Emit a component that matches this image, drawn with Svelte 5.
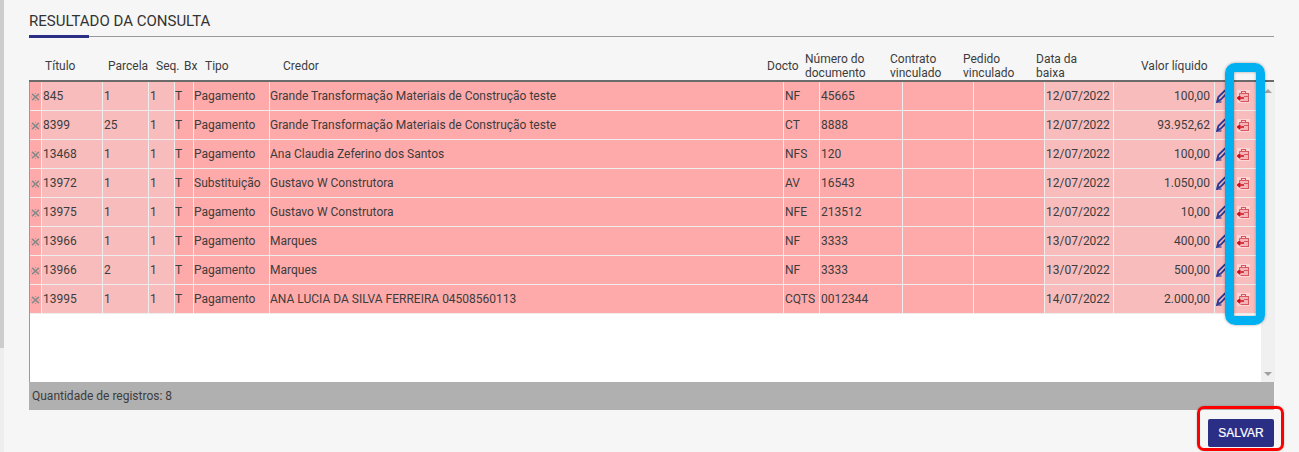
<script lang="ts">
	const columns = [
		{ key: 'x', w: 12 },
		{ key: 'titulo', w: 61, light: true },
		{ key: 'parcela', w: 46, light: true },
		{ key: 'seq', w: 26, light: true },
		{ key: 'bx', w: 19 },
		{ key: 'tipo', w: 76 },
		{ key: 'credor', w: 514 },
		{ key: 'docto', w: 36 },
		{ key: 'numero', w: 83 },
		{ key: 'contrato', w: 71 },
		{ key: 'pedido', w: 71 },
		{ key: 'baixa', w: 69, light: true },
		{ key: 'valor', w: 101, light: true },
		{ key: 'edit', w: 19, light: true },
		{ key: 'del', w: 27, light: true }
	];

	const rows = [
		['845', '1', '1', 'T', 'Pagamento', 'Grande Transformação Materiais de Construção teste', 'NF', '45665', '12/07/2022', '100,00'],
		['8399', '25', '1', 'T', 'Pagamento', 'Grande Transformação Materiais de Construção teste', 'CT', '8888', '12/07/2022', '93.952,62'],
		['13468', '1', '1', 'T', 'Pagamento', 'Ana Claudia Zeferino dos Santos', 'NFS', '120', '12/07/2022', '100,00'],
		['13972', '1', '1', 'T', 'Substituição', 'Gustavo W Construtora', 'AV', '16543', '12/07/2022', '1.050,00'],
		['13975', '1', '1', 'T', 'Pagamento', 'Gustavo W Construtora', 'NFE', '213512', '12/07/2022', '10,00'],
		['13966', '1', '1', 'T', 'Pagamento', 'Marques', 'NF', '3333', '13/07/2022', '400,00'],
		['13966', '2', '1', 'T', 'Pagamento', 'Marques', 'NF', '3333', '13/07/2022', '500,00'],
		['13995', '1', '1', 'T', 'Pagamento', 'ANA LUCIA DA SILVA FERREIRA 04508560113', 'CQTS', '0012344', '14/07/2022', '2.000,00']
	];
</script>

<div class="page">
	<div class="side"></div>
	<section class="panel">
		<h2>RESULTADO DA CONSULTA</h2>

		<div class="head">
			<span class="h-titulo">Título</span>
			<span class="h-parcela">Parcela</span>
			<span class="h-seq">Seq.</span>
			<span class="h-bx">Bx</span>
			<span class="h-tipo">Tipo</span>
			<span class="h-credor">Credor</span>
			<span class="h-docto">Docto</span>
			<span class="h-numero">Número do<br />documento</span>
			<span class="h-contrato">Contrato<br />vinculado</span>
			<span class="h-pedido">Pedido<br />vinculado</span>
			<span class="h-baixa">Data da<br />baixa</span>
			<span class="h-valor">Valor líquido</span>
		</div>

		<div class="body">
			<div class="rows">
				<table>
					<colgroup>
						{#each columns as col}
							<col style="width: {col.w}px" />
						{/each}
					</colgroup>
					<tbody>
						{#each rows as r}
							<tr>
								<td class="mark">
									<svg width="9" height="8" viewBox="0 0 9 8">
										<path d="M1 .8 8 7.2M8 .8 1 7.2" stroke="#8a8a8a" stroke-width="1.6" />
										<path d="M4 0h1v1H4zM4 7h1v1H4zM0 3.5h1v1H0zM8 3.5h1v1H8z" fill="#a08f8f" />
									</svg>
								</td>
								<td class="light">{r[0]}</td>
								<td class="light">{r[1]}</td>
								<td class="light">{r[2]}</td>
								<td class="tight">{r[3]}</td>
								<td class="tight">{r[4]}</td>
								<td class="tight">{r[5]}</td>
								<td>{r[6]}</td>
								<td>{r[7]}</td>
								<td></td>
								<td></td>
								<td class="light">{r[8]}</td>
								<td class="light right">{r[9]}</td>
								<td class="light icon">
									<svg width="14" height="14" viewBox="0 0 14 14">
										<path d="M1.2 12.6 2.4 8 8.6 1.8c.8-.8 1.7-.7 2.4 0 .7.7.8 1.6 0 2.4L4.8 10.6Z" fill="none" stroke="#2b3a94" stroke-width="1.9" />
										<path d="M1 13h4.5" stroke="#2b3a94" stroke-width="1.2" />
									</svg>
								</td>
								<td class="light icon del">
									<span class="del-box">
										<svg width="13" height="13" viewBox="0 0 13 13">
											<path d="M4.5 3.5V1.5h4v2" fill="none" stroke="#d9555c" stroke-width="1.1" />
											<path d="M2.5 3.5h9v8h-8M2.5 3.5V5M11.5 6.5H7" fill="#f7b4b8" stroke="#d9555c" stroke-width="1.1" />
											<path d="M.8 8h6.2M3.2 5.9.8 8l2.4 2.1" fill="none" stroke="#c8101a" stroke-width="1.7" />
										</svg>
									</span>
								</td>
							</tr>
						{/each}
					</tbody>
				</table>
			</div>
			<div class="scrollbar">
				<span class="arrow up"></span>
				<span class="arrow down"></span>
			</div>
		</div>

		<div class="count">Quantidade de registros: 8</div>

		<div class="actions">
			<button type="button">SALVAR</button>
		</div>
	</section>

	<div class="mark-blue"></div>
	<div class="mark-red"></div>
</div>

<style>
	:global(body) {
		margin: 0;
		background: #f6f6f6;
	}
	.page {
		position: relative;
		height: 452px;
		overflow: hidden;
		display: flex;
		font-family: Roboto, "Liberation Sans", sans-serif;
		font-size: 12px;
		color: #3c3c3c;
	}
	.side {
		width: 4px;
		height: 452px;
		background: linear-gradient(#cdcdcd 348px, #eeeeee 348px);
		flex: none;
	}
	.panel {
		width: 1245px;
		margin-left: 25px;
		flex: none;
	}
	h2 {
		margin: 0;
		height: 37px;
		box-sizing: border-box;
		padding-top: 13px;
		font-size: 15px;
		line-height: 17px;
		font-weight: 400;
		color: #333;
		border-bottom: 1px solid #999;
		position: relative;
	}
	h2::after {
		content: '';
		position: absolute;
		left: 0;
		bottom: -2px;
		width: 60px;
		height: 3px;
		background: #2a2f85;
	}
	.head {
		position: relative;
		height: 43px;
		border-bottom: 2px solid #6b6b6b;
		line-height: 14px;
	}
	.head span {
		position: absolute;
		top: 22px;
		white-space: nowrap;
	}
	.head .h-numero, .head .h-contrato, .head .h-pedido, .head .h-baixa {
		top: 15px;
	}
	.h-titulo { left: 16px; }
	.h-parcela { left: 79px; }
	.h-seq { left: 127px; }
	.h-bx { left: 155px; }
	.h-tipo { left: 176px; }
	.h-credor { left: 254px; }
	.h-docto { left: 738px; }
	.h-numero { left: 776px; }
	.h-contrato { left: 861px; }
	.h-pedido { left: 934px; }
	.h-baixa { left: 1007px; }
	.h-valor { left: 1112px; }
	.body {
		display: flex;
		height: 300px;
		border-left: 1px solid #999;
		background: #fff;
	}
	.rows {
		flex: 1;
	}
	table {
		border-collapse: separate;
		border-spacing: 0;
		table-layout: fixed;
		width: 1230px;
	}
	td {
		height: 29px;
		box-sizing: border-box;
		padding: 0 0 0 1px;
		background: #ffaaaa;
		border-right: 1px solid #eee;
		border-bottom: 1px solid #eee;
		white-space: nowrap;
		overflow: hidden;
		color: #3c3c3c;
	}
	td.light {
		background: #f8bcbc;
	}
	td.tight {
		padding-left: 0;
	}
	td.right {
		text-align: right;
		padding-right: 4px;
	}
	td.mark {
		padding: 1px 0 0 1px;
	}
	td.mark svg, td.icon svg {
		display: block;
	}
	td.icon {
		padding: 0 0 0 1px;
	}
	td.del {
		border-right: 0;
		padding-left: 3px;
	}
	.del-box {
		display: block;
		width: 13px;
		height: 13px;
		background: #fcd6d6;
	}
	.scrollbar {
		width: 14px;
		flex: none;
		background: #f0f0f0;
		position: relative;
	}
	.arrow {
		position: absolute;
		left: 3px;
		width: 0;
		height: 0;
		border-left: 4px solid transparent;
		border-right: 4px solid transparent;
	}
	.arrow.up {
		top: 7px;
		border-bottom: 4px solid #a0a0a0;
	}
	.arrow.down {
		bottom: 6px;
		border-top: 4px solid #a0a0a0;
	}
	.count {
		height: 28px;
		line-height: 28px;
		padding-left: 3px;
		background: #b0b0b0;
		color: #3c3c3c;
	}
	.actions {
		display: flex;
		justify-content: flex-end;
		padding-top: 9px;
	}
	button {
		width: 66px;
		height: 28px;
		border: 0;
		border-radius: 2px;
		background: #2a2f85;
		color: #fff;
		font-family: "Liberation Sans", Arial, sans-serif;
		font-size: 12px;
		padding: 0;
		-webkit-text-stroke: 0.2px #fff;
	}
	.mark-blue {
		position: absolute;
		left: 1225px;
		top: 63px;
		width: 22px;
		height: 244px;
		border: 9px solid #00b0f0;
		border-radius: 10px;
		box-shadow: 0 0 3px rgba(0, 0, 0, 0.35), inset 0 0 3px rgba(0, 0, 0, 0.35);
	}
	.mark-red {
		position: absolute;
		left: 1197px;
		top: 406px;
		width: 81px;
		height: 39px;
		border: 3px solid #f00;
		border-radius: 7px;
		box-shadow: 0 0 2px rgba(0, 0, 0, 0.3);
	}
</style>
